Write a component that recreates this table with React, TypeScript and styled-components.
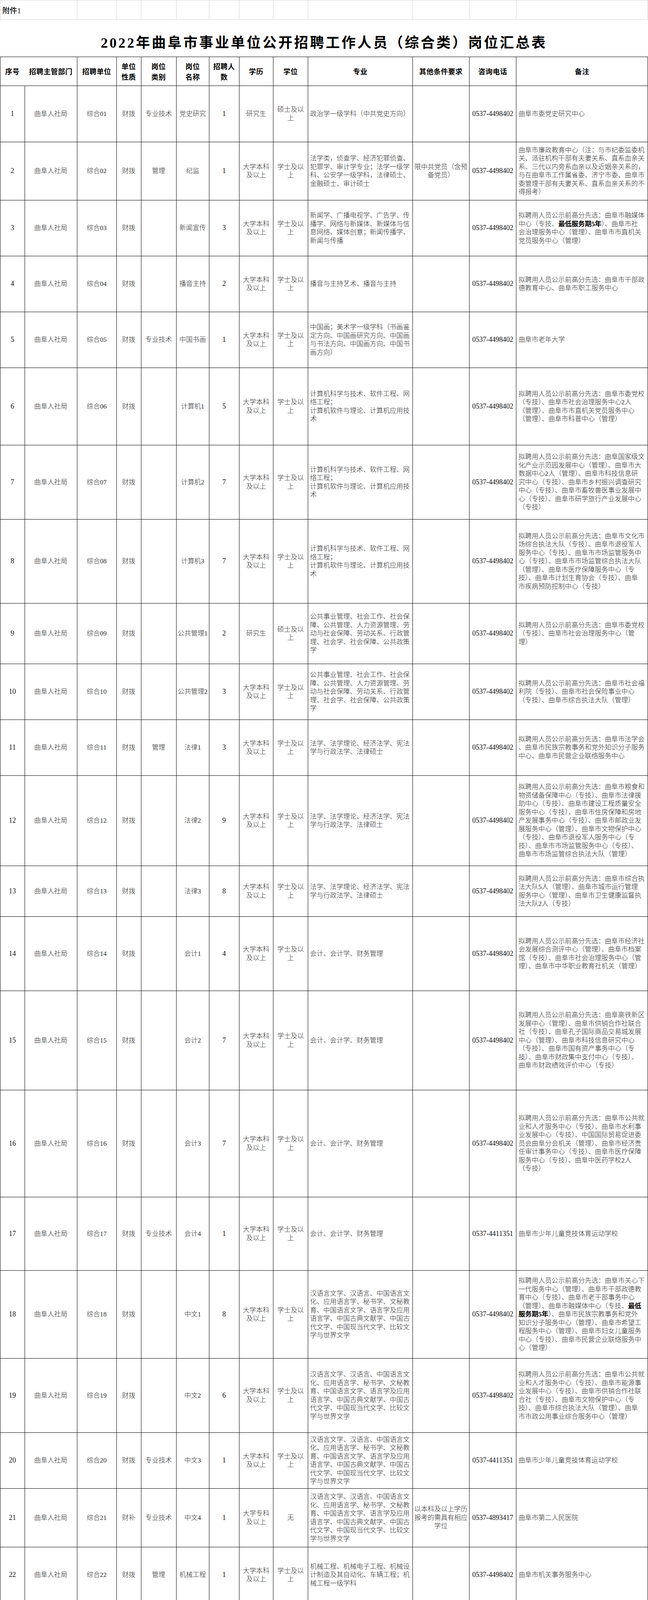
import React from "react";
import styled, { createGlobalStyle } from "styled-components";

const COLS =
  "62.5px 134px 101px 63px 90px 84.5px 76.5px 87.5px 88.8px 267.8px 145.1px 120.7px 336.6px";

const PHONE = "0537-4498402";

type Job = {
  cat: string;
  name: string;
  n: number;
  edu?: string;
  degree?: string;
  nature?: string;
  major: string;
  other?: string;
  phone?: string;
  note: string;
  h: number;
};

const CS_MAJOR =
  "计算机科学与技术、软件工程、网\n络工程；\n计算机软件与理论、计算机应用技\n术";
const PUB_MAJOR =
  "公共事业管理、社会工作、社会保\n障、公共管理、人力资源管理、劳\n动与社会保障、劳动关系、行政管\n理、社会学、社会保障、公共政策\n学";
const LAW_MAJOR = "法学、法学理论、经济法学、宪法\n学与行政法学、法律硕士";
const ACC_MAJOR = "会计、会计学、财务管理";
const CN_MAJOR =
  "汉语言文学、汉语言、中国语言文\n化、应用语言学、秘书学、文秘教\n育、中国语言文学、语言学及应用\n语言学、中国古典文献学、中国古\n代文学、中国现当代文学、比较文\n学与世界文学";
const PICK = "拟聘用人员公示前高分先选：";

const jobs: Job[] = [
  {
    cat: "专业技术", name: "党史研究", n: 1, edu: "研究生", degree: "硕士及以上",
    major: "政治学一级学科（中共党史方向）", note: "曲阜市委党史研究中心", h: 144,
  },
  {
    cat: "管理", name: "纪监", n: 1,
    major: "法学类，侦查学、经济犯罪侦查、\n犯罪学、审计学专业；法学一级学\n科、公安学一级学科，法律硕士、\n金融硕士、审计硕士",
    other: "限中共党员（含预备党员）",
    note: "曲阜市廉政教育中心（注：与市纪委监委机\n关、派驻机构干部有夫妻关系、直系血亲关\n系、三代以内旁系血亲以及近姻亲关系的，\n与在曲阜市工作属省委、济宁市委、曲阜市\n委管理干部有夫妻关系、直系血亲关系的不\n得报考）",
    h: 149,
  },
  {
    cat: "", name: "新闻宣传", n: 3,
    major: "新闻学、广播电视学、广告学、传\n播学、网络与新媒体、新媒体与信\n息网络、媒体创意；新闻传播学、\n新闻与传播",
    note: PICK + "曲阜市融媒体\n中心（专技、**最低服务期5年**）、曲阜市社\n会治理服务中心（管理）、曲阜市市直机关\n党员服务中心（管理）",
    h: 143,
  },
  {
    cat: "", name: "播音主持", n: 2, major: "播音与主持艺术、播音与主持",
    note: PICK + "曲阜市干部政\n德教育中心、曲阜市职工服务中心", h: 143,
  },
  {
    cat: "专业技术", name: "中国书画", n: 1,
    major: "中国画；美术学一级学科（书画鉴\n定方向、中国画研究方向、中国画\n与书法方向、中国画方向、中国书\n画方向）",
    note: "曲阜市老年大学", h: 143,
  },
  {
    cat: "", name: "计算机1", n: 5, major: CS_MAJOR,
    note: PICK + "曲阜市委党校\n（专技）、曲阜市社会治理服务中心2人\n（管理）、曲阜市市直机关党员服务中心\n（管理）、曲阜市科普中心（管理）",
    h: 198,
  },
  {
    cat: "", name: "计算机2", n: 7, major: CS_MAJOR,
    note: PICK + "曲阜国家级文\n化产业示范园发展中心（管理）、曲阜市大\n数据中心2人（管理）、曲阜市科技信息研\n究中心（专技）、曲阜市乡村振兴调查研究\n中心（专技）、曲阜市畜牧兽医事业发展中\n心（专技）、曲阜市研学旅行产业发展中心\n（专技）",
    h: 190,
  },
  {
    cat: "", name: "计算机3", n: 7, major: CS_MAJOR,
    note: PICK + "曲阜市文化市\n场综合执法大队（专技）、曲阜市退役军人\n服务中心（专技）、曲阜市市场监管服务中\n心（专技）、曲阜市市场监管综合执法大队\n（管理）、曲阜市医疗保障服务中心（专\n技）、曲阜市计划生育协会（专技）、曲阜\n市疾病预防控制中心（专技）",
    h: 215,
  },
  {
    cat: "", name: "公共管理1", n: 2, edu: "研究生", degree: "硕士及以上", major: PUB_MAJOR,
    note: PICK + "曲阜市委党校\n（专技）、曲阜市社会治理服务中心（管\n理）",
    h: 155,
  },
  {
    cat: "", name: "公共管理2", n: 3, major: PUB_MAJOR,
    note: PICK + "曲阜市社会福\n利院（专技）、曲阜市社会保险事业中心\n（专技）、曲阜市综合执法大队（管理）",
    h: 143,
  },
  {
    cat: "管理", name: "法律1", n: 3, major: LAW_MAJOR,
    note: PICK + "曲阜市法学会\n、曲阜市民族宗教事务和党外知识分子服务\n中心、曲阜市民营企业联络服务中心",
    h: 143,
  },
  {
    cat: "", name: "法律2", n: 9, major: LAW_MAJOR,
    note: PICK + "曲阜市粮食和\n物资储备保障中心（专技）、曲阜市法律援\n助中心（专技）、曲阜市建设工程质量安全\n服务中心（专技）、曲阜市住房保障和房地\n产发展事务中心（专技）、曲阜市邮政业发\n展服务中心（管理）、曲阜市文物保护中心\n（专技）、曲阜市退役军人服务中心（专\n技）、曲阜市市场监管服务中心（专技）、\n曲阜市市场监管综合执法大队（管理）",
    h: 231,
  },
  {
    cat: "", name: "法律3", n: 8, major: LAW_MAJOR,
    note: PICK + "曲阜市综合执\n法大队5人（管理）、曲阜市城市运行管理\n服务中心（管理）、曲阜市卫生健康监督执\n法大队2人（专技）",
    h: 130,
  },
  {
    cat: "", name: "会计1", n: 4, major: ACC_MAJOR,
    note: PICK + "曲阜市经济社\n会发展综合测评中心（管理）、曲阜市档案\n馆（专技）、曲阜市社会治理服务中心（管\n理）、曲阜市中华职业教育社机关（管理）",
    h: 190,
  },
  {
    cat: "", name: "会计2", n: 7, major: ACC_MAJOR,
    note: PICK + "曲阜高铁新区\n发展中心（管理）、曲阜市供销合作社联合\n社（专技）、曲阜孔子国际商品交易城发展\n中心（管理）、曲阜市科技信息研究中心\n（专技）、曲阜市国有资产事务中心（专\n技）、曲阜市财政集中支付中心（专技）、\n曲阜市财政绩效评价中心（专技）",
    h: 254,
  },
  {
    cat: "", name: "会计3", n: 7, major: ACC_MAJOR,
    note: PICK + "曲阜市公共就\n业和人才服务中心（专技）、曲阜市水利事\n业发展中心（专技）、中国国际贸易促进委\n员会曲阜分会机关（管理）、曲阜市经济责\n任审计事务中心（专技）、曲阜市医疗保障\n服务中心（专技）、曲阜中医药学校2人\n（专技）",
    h: 274,
  },
  {
    cat: "专业技术", name: "会计4", n: 1, major: ACC_MAJOR, phone: "0537-4411351",
    note: "曲阜市少年儿童竞技体育运动学校", h: 188,
  },
  {
    cat: "", name: "中文1", n: 8, major: CN_MAJOR,
    note: PICK + "曲阜市关心下\n一代服务中心（管理）、曲阜市干部政德教\n育中心（专技）、曲阜市老干部事务中心\n（管理）、曲阜市融媒体中心（专技、**最低**\n**服务期5年**）、曲阜市民族宗教事务和党外\n知识分子服务中心（管理）、曲阜市希望工\n程服务中心（管理）、曲阜市妇女儿童服务\n中心（专技）、曲阜市民营企业联络服务中\n心（管理）",
    h: 225,
  },
  {
    cat: "", name: "中文2", n: 6, major: CN_MAJOR,
    note: PICK + "曲阜市公共就\n业和人才服务中心（专技）、曲阜市能源事\n业发展中心（专技）、曲阜市供销合作社联\n合社（专技）、曲阜市文物保护中心（专\n技）、曲阜市综合执法大队（管理）、曲阜\n市市政公用事业综合服务中心（管理）",
    h: 190,
  },
  {
    cat: "专业技术", name: "中文3", n: 1, major: CN_MAJOR, phone: "0537-4411351",
    note: "曲阜市少年儿童竞技体育运动学校", h: 143,
  },
  {
    cat: "专业技术", name: "中文4", n: 1, nature: "财补", edu: "大学专科及以上", degree: "无",
    major: CN_MAJOR, other: "以本科及以上学历报考的需具有相应学位", phone: "0537-4893417",
    note: "曲阜市第二人民医院", h: 150,
  },
  {
    cat: "管理", name: "机械工程", n: 1,
    major: "机械工程、机械电子工程、机械设\n计制造及其自动化、车辆工程；机\n械工程一级学科",
    note: "曲阜市机关事务服务中心", h: 143,
  },
  {
    cat: "", name: "食品安全", n: 2,
    major: "食品科学与工程、食品质量与安全\n、农产品质量与安全、食品科学、\n农产品加工及贮藏工程、水产品加\n工及贮藏工程",
    note: PICK + "曲阜市市场监\n管服务中心（专技）、曲阜市市场监管综合\n执法大队（管理）",
    h: 143,
  },
  {
    cat: "", name: "城乡规划", n: 4, major: "城乡规划、人文地理与城乡规划；\n城乡规划学一级学科",
    note: PICK + "曲阜高铁新区\n发展中心（管理）2人、曲阜市城乡规划中\n心（专技）2人",
    h: 143,
  },
  {
    cat: "专业技术", name: "农学", n: 2, major: "农业工程、农业机械化及其自动化\n专业、农业机械化工程",
    note: "曲阜市农业综合执法大队", h: 143,
  },
  {
    cat: "专业技术", name: "动物医学", n: 3,
    major: "动物学、动物科学、动物生物技术\n、畜禽生产教育、动物医学、动物\n药学、动植物检疫、动物遗传育种\n与繁殖、动物营养与饲料科学、基\n础兽医学、预防兽医学、临床兽医\n学",
    note: "曲阜市畜牧兽医事业发展中心", h: 150,
  },
  {
    cat: "专业技术", name: "网络工程", n: 1, major: "网络工程、数字媒体技术",
    note: "曲阜市政务服务中心", h: 143,
  },
  {
    cat: "专业技术", name: "工程管理", n: 2, major: "工程管理、项目管理",
    note: PICK + "曲阜市建设工\n程质量安全服务中心、曲阜市河湖事务服务\n中心工程管理",
    h: 143,
  },
  {
    cat: "专业技术", name: "土木工程", n: 4, major: "土木工程；土木工程一级学科",
    note: PICK + "曲阜市政府投\n资审计中心2人、曲阜市建设工程质量安全\n服务中心、曲阜市鲁国故城国家考古遗址公\n园保护中心",
    h: 143,
  },
  {
    cat: "专业技术", name: "旅游管理", n: 1, major: "旅游管理、酒店管理、会展经济与\n管理、旅游管理与服务教育",
    note: "曲阜尼山省级文化旅游度假区发展中心", h: 143,
  },
  {
    cat: "", name: "金融经济", n: 5,
    major: "经济学、财政学、金融学；应用经\n济学一级学科（金融学方向、财政\n学方向）、金融硕士",
    note: "拟聘用人员公示前高分先选：济宁市公共资\n源交易服务中心曲阜分中心（专技）、曲阜\n市投资促进服务中心2人（管理）、曲阜市\n金融发展服务中心（管理）、曲阜市能源事\n业发展中心（专技）",
    h: 143,
  },
  {
    cat: "专业技术", name: "化学", n: 1, major: "化学、应用化学",
    note: "曲阜市检验检测中心", h: 143,
  },
  {
    cat: "专业技术", name: "心理学", n: 1, edu: "研究生", degree: "硕士及以上",
    major: "心理学一级学科（基础心理学方向\n、应用心理学方向）", phone: "0537-4893417",
    note: "曲阜中医药学校", h: 143,
  },
];

const headers = [
  "序号", "招聘主管部门", "招聘单位", "单位\n性质", "岗位\n类别", "岗位\n名称",
  "招聘人\n数", "学历", "学位", "专业", "其他条件要求", "咨询电话", "备注",
];

const RichText = ({ text }: { text: string }) => (
  <CellText>
    {text.split("**").map((part, i) =>
      i % 2 === 1 ? <Strong key={i}>{part}</Strong> : <React.Fragment key={i}>{part}</React.Fragment>
    )}
  </CellText>
);

const App = () => {
  return (
    <>
      <GlobalStyle />
      <Page>
        <AttachRow>
          <AttachCell $span={2}>附件1</AttachCell>
          {Array.from({ length: 11 }).map((_, i) => (
            <AttachCell key={i} />
          ))}
        </AttachRow>
        <TitleRow>
          <Title>2022年曲阜市事业单位公开招聘工作人员（综合类）岗位汇总表</Title>
        </TitleRow>
        <Sheet>
          <Row $h={74}>
            {headers.map((label, i) => (
              <HeaderCell key={label} $noRight={i === 0}>
                <CellText>{label}</CellText>
              </HeaderCell>
            ))}
          </Row>
          {jobs.map((job, i) => (
            <Row key={job.name} $h={job.h}>
              <Cell $num>{i + 1}</Cell>
              <Cell>曲阜人社局</Cell>
              <Cell>综合{String(i + 1).padStart(2, "0")}</Cell>
              <Cell>{job.nature ?? "财拨"}</Cell>
              <Cell>{job.cat}</Cell>
              <Cell>
                <CellText>{job.name}</CellText>
              </Cell>
              <Cell $num>{job.n}</Cell>
              <Cell>
                <CellText>{job.edu ?? "大学本科及以上"}</CellText>
              </Cell>
              <Cell>
                <CellText>{job.degree ?? "学士及以上"}</CellText>
              </Cell>
              <Cell $align="left">
                <RichText text={job.major} />
              </Cell>
              <Cell>
                <CellText>{job.other ?? ""}</CellText>
              </Cell>
              <Cell $num>{job.phone ?? PHONE}</Cell>
              <Cell $align="left">
                <RichText text={job.note} />
              </Cell>
            </Row>
          ))}
        </Sheet>
      </Page>
    </>
  );
};

export default App;

const GlobalStyle = createGlobalStyle`
  * {
    box-sizing: border-box;
  }

  html,
  body {
    margin: 0;
    background: #ffffff;
    overflow-x: hidden;
  }
`;

const Page = styled.div`
  width: 1659px;
  font-family: "Liberation Serif", "Noto Sans CJK SC", serif;
  color: #2b2b2b;
`;

const AttachRow = styled.div`
  display: grid;
  grid-template-columns: ${COLS};
  width: 1659px;
  height: 50px;
  border-top: 1px solid #cfd3d8;
  border-bottom: 1px solid #cfd3d8;
  border-left: 1px solid #cfd3d8;
`;

const AttachCell = styled.div<{ $span?: number }>`
  grid-column: span ${({ $span }) => $span ?? 1};
  display: flex;
  align-items: center;
  padding-left: 5px;
  border-right: 1px solid #cfd3d8;

  font-family: "Liberation Serif", "Noto Sans CJK SC", serif;
  font-size: 19px;
  font-weight: 500;
  color: #111;
`;

const TitleRow = styled.div`
  height: 95px;
  display: flex;
  align-items: center;
  justify-content: center;
  padding-top: 16px;
`;

const Title = styled.h1`
  margin: 0;
  font-family: "Liberation Serif", "Noto Sans CJK SC", serif;
  font-size: 36px;
  font-weight: 700;
  letter-spacing: 4.5px;
  color: #000;
`;

const Sheet = styled.div`
  width: 1659px;
  border-top: 1px solid #000;
  border-left: 1px solid #000;
`;

const Row = styled.div<{ $h: number }>`
  display: grid;
  grid-template-columns: ${COLS};
  height: ${({ $h }) => $h}px;
`;

const Cell = styled.div<{ $align?: "left" | "center"; $num?: boolean }>`
  display: flex;
  align-items: center;
  justify-content: ${({ $align }) => ($align === "left" ? "flex-start" : "center")};
  min-width: 0;
  min-height: 0;
  overflow: hidden;
  padding: ${({ $align }) => ($align === "left" ? "0 3px 0 5px" : "0 2px")};
  border-right: 1px solid #000;
  border-bottom: 1px solid #000;

  text-align: ${({ $align }) => ($align === "left" ? "left" : "center")};
  font-size: ${({ $num }) => ($num ? "18px" : "17px")};
  font-weight: 300;
  line-height: 21.5px;
  color: ${({ $num }) => ($num ? "#111" : "#2b2b2b")};
`;

const HeaderCell = styled(Cell)<{ $noRight?: boolean }>`
  font-family: "Noto Sans CJK SC", sans-serif;
  font-size: 18px;
  font-weight: 700;
  line-height: 27px;
  letter-spacing: 0.5px;
  color: #000;
  ${({ $noRight }) => $noRight && "border-right-color: transparent;"}
`;

const CellText = styled.span`
  display: block;
  white-space: pre-line;
`;

const Strong = styled.strong`
  font-weight: 700;
  color: #000;
`;
